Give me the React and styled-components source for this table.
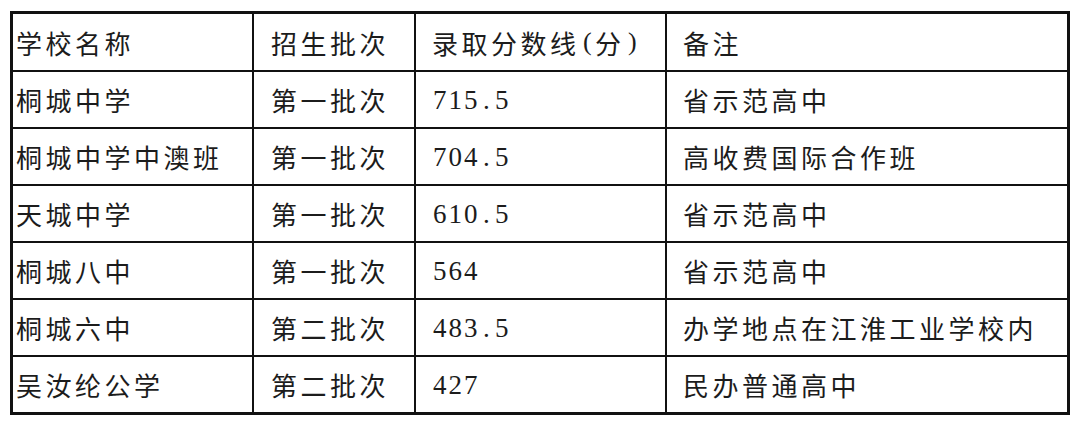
import React from "react";
import styled, { createGlobalStyle } from "styled-components";

const Global = createGlobalStyle`
  html, body {
    margin: 0;
    padding: 0;
    background: #fff;
  }
  body {
    font-family: "Liberation Serif", "Noto Sans CJK SC", serif;
    color: #1c1c1c;
  }
`;

const Page = styled.div`
  padding: 11px 10px 0 10px;
`;

const Grid = styled.div`
  display: grid;
  grid-template-columns: 239px 160px 249px 400px;
  grid-template-rows: 56px repeat(6, 55px);
  gap: 2px;
  padding: 3px;
  background: #111;
  width: 1054px;
`;

const pads = [3, 17, 16, 16];

const Cell = styled.div`
  background: #fff;
  display: flex;
  align-items: center;
  padding-left: ${(p) => pads[p.$col]}px;
  font-size: 26px;
  letter-spacing: 3.5px;
  white-space: nowrap;
  overflow: hidden;
`;

const Num = styled.span`
  display: flex;
  font-family: "Liberation Serif", serif;
  font-size: 27px;
  letter-spacing: 0;
  padding-top: 2px;
`;

const Char = styled.span`
  display: inline-block;
  width: 15.5px;
  text-align: center;
  letter-spacing: 0;
`;

const header = ["学校名称", "招生批次", "录取分数线(分)", "备注"];

const rows = [
  ["桐城中学", "第一批次", "715.5", "省示范高中"],
  ["桐城中学中澳班", "第一批次", "704.5", "高收费国际合作班"],
  ["天城中学", "第一批次", "610.5", "省示范高中"],
  ["桐城八中", "第一批次", "564", "省示范高中"],
  ["桐城六中", "第二批次", "483.5", "办学地点在江淮工业学校内"],
  ["吴汝纶公学", "第二批次", "427", "民办普通高中"],
];

// half-width characters sit in fixed cells, like the source's monospaced digits
const half = (s) =>
  s.split("").map((c, k) =>
    /[\x00-\x7f]/.test(c) ? <Char key={k}>{c}</Char> : <React.Fragment key={k}>{c}</React.Fragment>
  );

export default function App() {
  return (
    <>
      <Global />
      <Page>
        <Grid>
          {header.map((h, i) => (
            <Cell key={h} $col={i}>
              {half(h)}
            </Cell>
          ))}
          {rows.map((r) =>
            r.map((v, i) => (
              <Cell key={r[0] + i} $col={i}>
                {i === 2 ? <Num>{half(v)}</Num> : v}
              </Cell>
            ))
          )}
        </Grid>
      </Page>
    </>
  );
}
